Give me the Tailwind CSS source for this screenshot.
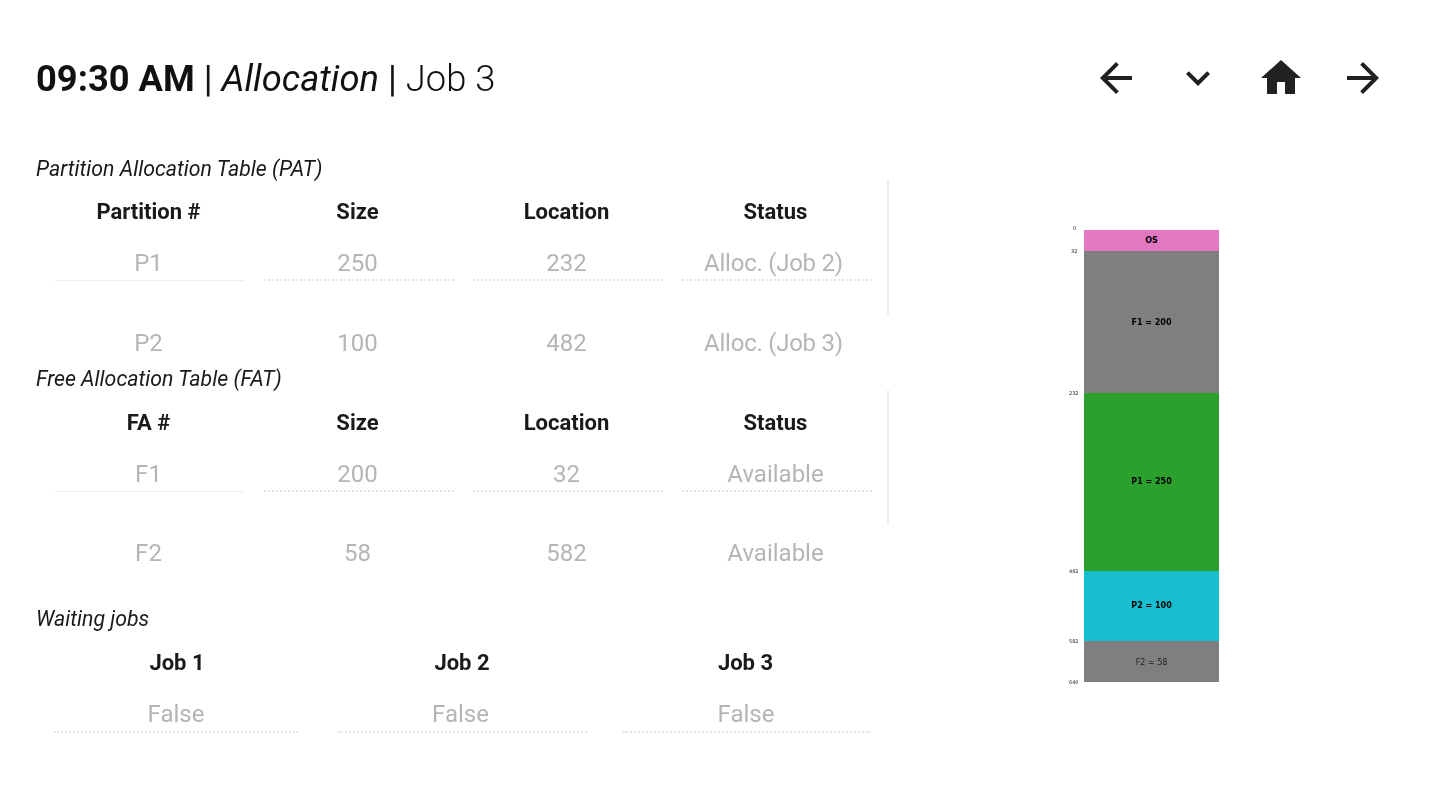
<!doctype html>
<html>
<head>
<meta charset="utf-8">
<script src="https://cdn.jsdelivr.net/npm/@tailwindcss/browser@4"></script>
</head>
<body class="bg-white">
<div class="w-[1440px] h-[810px] overflow-hidden font-['Roboto',sans-serif] text-[#1a1a1a] pt-[52px] blur-[0.6px]">
  <header class="flex items-center justify-between h-[52px] pl-[36px] pr-[36px]">
    <h1 class="text-[36.3px] text-[#111] font-light whitespace-nowrap leading-[52px] pt-[2px]"><b class="font-bold">09:30 AM</b><span class="font-normal"> | </span><i class="font-normal">Allocation</i><span class="font-normal"> | </span>Job 3</h1>
    <nav class="flex text-[#212121]">
      <div class="w-[82.3px] flex justify-center"><svg class="w-12 h-12 fill-current" viewBox="0 0 24 24"><path d="M20 11H7.83l5.59-5.59L12 4l-8 8 8 8 1.41-1.41L7.83 13H20v-2z"/></svg></div>
      <div class="w-[82.3px] flex justify-center"><svg class="w-12 h-12 fill-current" viewBox="0 0 24 24"><path d="M16.59 8.59L12 13.17 7.41 8.59 6 10l6 6 6-6z"/></svg></div>
      <div class="w-[82.3px] flex justify-center"><svg class="w-12 h-12 fill-current" viewBox="0 0 24 24"><path d="M10 20v-6h4v6h5v-8h3L12 3 2 12h3v8z"/></svg></div>
      <div class="w-[82.3px] flex justify-center"><svg class="w-12 h-12 fill-current" viewBox="0 0 24 24"><path d="M12 4l-1.41 1.41L16.17 11H4v2h12.17l-5.58 5.59L12 20l8-8z"/></svg></div>
    </nav>
  </header>
  <main class="flex">
    <div class="w-[889px] pl-[36px] pt-[51px] shrink-0">
      <section class="h-[210px]">
        <p class="italic text-[21.3px] leading-[28px] h-[26px] text-[#1a1a1a]">Partition Allocation Table (PAT)</p>
        <div class="h-[135px] -mt-[1px] pt-[11px] border-r-2 border-[#eeeeee] pl-[8px]">
          <div class="grid grid-cols-[209px_209px_209px_209px] h-[38px] items-center pt-[2px] text-center text-[22px] font-bold text-[#1a1a1a]">
            <div>Partition #</div><div>Size</div><div>Location</div><div>Status</div>
          </div>
          <div class="grid grid-cols-[209px_209px_209px_209px] text-center text-[24px] text-[#b5b5b5] mt-[15px] ml-[1px]">
            <div class="mx-[9.5px] pr-[2px] h-[37px] leading-[38px] border-b border-[#eeeeee]">P1</div>
            <div class="mx-[9.5px] pr-[2px] h-[37px] leading-[38px] border-b-2 border-dotted border-[#e4e4e4]">250</div>
            <div class="mx-[9.5px] pr-[2px] h-[37px] leading-[38px] border-b-2 border-dotted border-[#e4e4e4]">232</div>
            <div class="mx-[9.5px] pr-[6px] h-[37px] leading-[38px] border-b-2 border-dotted border-[#e4e4e4] tracking-[-0.25px]">Alloc. (Job 2)</div>
          </div>
          <div class="grid grid-cols-[209px_209px_209px_209px] text-center text-[24px] text-[#b5b5b5] mt-[43px]">
            <div class="leading-[38px]">P2</div><div class="leading-[38px]">100</div><div class="leading-[38px]">482</div><div class="leading-[38px] pr-[4px] tracking-[-0.25px]">Alloc. (Job 3)</div>
          </div>
        </div>
      </section>
      <section class="h-[240px]">
        <p class="italic text-[21.3px] leading-[28px] h-[26px] text-[#1a1a1a]">Free Allocation Table (FAT)</p>
        <div class="h-[135px] -mt-[1px] pt-[12px] border-r-2 border-[#eeeeee] pl-[8px]">
          <div class="grid grid-cols-[209px_209px_209px_209px] h-[38px] items-center pt-[2px] text-center text-[22px] font-bold text-[#1a1a1a]">
            <div>FA #</div><div>Size</div><div>Location</div><div>Status</div>
          </div>
          <div class="grid grid-cols-[209px_209px_209px_209px] text-center text-[24px] text-[#b5b5b5] mt-[15px] ml-[1px]">
            <div class="mx-[9.5px] pr-[2px] h-[37px] leading-[38px] border-b border-[#eeeeee]">F1</div>
            <div class="mx-[9.5px] pr-[2px] h-[37px] leading-[38px] border-b-2 border-dotted border-[#e4e4e4]">200</div>
            <div class="mx-[9.5px] pr-[2px] h-[37px] leading-[38px] border-b-2 border-dotted border-[#e4e4e4]">32</div>
            <div class="mx-[9.5px] pr-[2px] h-[37px] leading-[38px] border-b-2 border-dotted border-[#e4e4e4]">Available</div>
          </div>
          <div class="grid grid-cols-[209px_209px_209px_209px] text-center text-[24px] text-[#b5b5b5] mt-[42px]">
            <div class="leading-[38px]">F2</div><div class="leading-[38px]">58</div><div class="leading-[38px]">582</div><div class="leading-[38px]">Available</div>
          </div>
        </div>
      </section>
      <section>
        <p class="italic text-[21.3px] leading-[28px] h-[26px] text-[#1a1a1a]">Waiting jobs</p>
        <div class="-mt-[1px] pt-[12px] pl-[18px] w-[836px]">
          <div class="grid grid-cols-[284px_284px_249px] h-[38px] items-center pt-[2px] text-center text-[22px] font-bold text-[#1a1a1a]">
            <div class="pr-[38px]">Job 1</div><div class="pr-[36px]">Job 2</div><div class="pr-[2px]">Job 3</div>
          </div>
          <div class="grid grid-cols-[284px_284px_249px] text-center text-[24px] text-[#b5b5b5] mt-[15px]">
            <div class="w-[244px] h-[38px] leading-[39px] border-b-2 border-dotted border-[#e4e4e4]">False</div>
            <div class="w-[249px] pr-[4px] h-[38px] leading-[39px] border-b-2 border-dotted border-[#e4e4e4]">False</div>
            <div class="w-[248px] ml-[1px] pr-[2px] h-[38px] leading-[39px] border-b-2 border-dotted border-[#e4e4e4]">False</div>
          </div>
        </div>
      </section>
    </div>
    <div class="flex-1 pl-[195px] pt-[126px]">
      <div class="w-[135px] font-['DejaVu_Sans',sans-serif] text-[8px] font-bold text-black text-center">
        <div class="relative h-[21px] leading-[21px] bg-[#e377c2]">OS
          <span class="absolute -left-[11px] -top-[7px] text-[5px] font-normal leading-[10px] text-[#222]">0</span>
          <span class="absolute -left-[13px] top-[16px] text-[5px] font-normal leading-[10px] text-[#222]">32</span>
        </div>
        <div class="relative h-[142px] leading-[144px] bg-[#7f7f7f]">F1 = 200
          <span class="absolute -left-[15px] top-[137px] text-[5px] font-normal leading-[10px] text-[#222]">232</span>
        </div>
        <div class="relative h-[178px] leading-[178px] bg-[#2ca02c]">P1 = 250
          <span class="absolute -left-[15px] top-[173px] text-[5px] font-normal leading-[10px] text-[#222]">482</span>
        </div>
        <div class="relative h-[70px] leading-[70px] bg-[#17becf]">P2 = 100
          <span class="absolute -left-[15px] top-[65px] text-[5px] font-normal leading-[10px] text-[#222]">582</span>
        </div>
        <div class="relative h-[41px] leading-[43px] bg-[#7f7f7f] font-normal text-[#222]">F2 = 58
          <span class="absolute -left-[15px] top-[36px] text-[5px] font-normal leading-[10px] text-[#222]">640</span>
        </div>
      </div>
    </div>
  </main>
</div>
</body>
</html>
